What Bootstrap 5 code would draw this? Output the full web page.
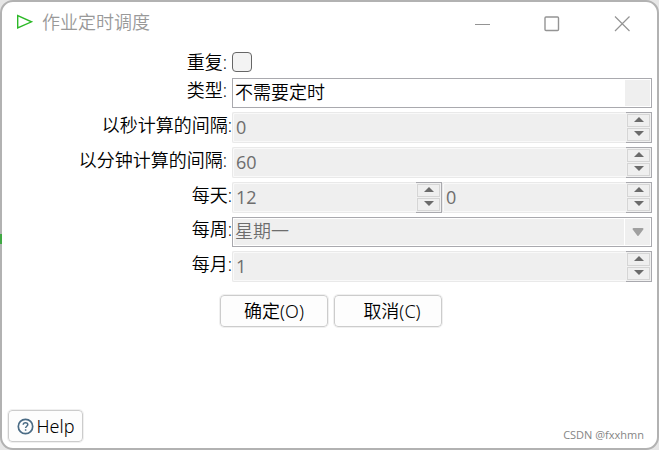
<!DOCTYPE html>
<html lang="zh-CN">
<head>
<meta charset="utf-8">
<meta name="viewport" content="width=device-width, initial-scale=1">
<title>作业定时调度</title>
<link href="https://cdn.jsdelivr.net/npm/bootstrap@5.3.0/dist/css/bootstrap.min.css" rel="stylesheet">
<style>
  body { background: #e6e6e6; color: #000; font: 18px/24px "Open Sans", "Noto Sans CJK SC", sans-serif; font-weight: 350; }
  .dialog { border: 2px solid #b2b2b2; border-radius: 13px; background: #fff; }
  .edge-mark { left: 0; top: 234px; width: 2px; height: 10px; background: #3fa843; }
  .titlebar { height: 42px; padding: 0 0 3px 14px; color: #999; }
  .titlebar h1 { font-size: 18px; line-height: 24px; font-weight: 350; }
  .win-btn { width: 70px; height: 38px; border: 0; background: none; color: #949494; }
  .form-area { padding: 6px 5px 0 0; }
  .line { height: 31px; margin-bottom: 4px; }
  .line-check { height: 24px; margin-bottom: 4px; }
  .line-combo { height: 30px; margin-bottom: 4px; }
  .name { width: 230px; padding-bottom: 6px; text-align: right; white-space: nowrap; flex: none; }
  .name-gap { padding-right: 5px; }
  .tick { appearance: none; width: 20px; height: 20px; border: 1px solid #666; border-radius: 4px; background: #f3f3f3; }
  .combo { border: 1px solid #a9a9ae; padding: 1px; background: #fff; }
  .combo select { appearance: none; border: 0; padding: 0 0 2px 1px; background: #fff; color: #000; opacity: 1; font-weight: 350; }
  .combo-end { width: 25px; margin-left: 1px; background: #efefef; flex: none; }
  .combo select:disabled { background: #efefef; color: #6d6d6d; }
  .field { border: 1px solid #e9e9e9; border-right: 0; border-radius: 2px 0 0 2px; box-shadow: inset 1px 1px #f9f9f9, inset 0 -1px #f9f9f9; background: #efefef; color: #6d6d6d; padding: 0 0 1px 3px; min-width: 0; width: 0; }
  .spin { width: 26px; border: 1px solid #a9a9ae; border-left: 0; background: #f1f1f1; padding: 1px; gap: 1px; flex: none; }
  .spin button { flex: 1; border: 1px solid #d5d5d5; background: #efefef; padding: 0 0 2px; min-height: 0; line-height: 0; color: #6b6b6b; }
  .spin svg { display: block; margin: 0 auto; }
  .first-spin { width: 50%; flex: none; }
  .push { border: 1px solid #ccc; border-radius: 4px; outline: 1px solid #f0f0f0; background: #fdfdfd; color: #000; height: 32px; padding: 0; font-family: "Noto Sans", "Noto Sans CJK SC", sans-serif; font-weight: 350; }
  .push-dialog { width: 108px; }
  .actions { gap: 6px; padding: 9px 0 0 8px; }
  .footer-area { padding: 0 13px 6px 6px; }
  .push-help { width: 75px; gap: 3px; }
  .credit { font: 11px/14px "Open Sans", sans-serif; color: #858585; }
</style>
<script src="https://cdn.jsdelivr.net/npm/bootstrap@5.3.0/dist/js/bootstrap.bundle.min.js"></script>
</head>
<body>
<main class="dialog d-flex flex-column vh-100">
  <header class="titlebar d-flex align-items-center">
    <svg width="18" height="16" viewBox="0 0 18 16" fill="none" stroke="#2db928" stroke-width="1.4" aria-hidden="true"><path d="M1.7 1.6V14L15.5 7.8Z"/></svg>
    <h1 class="mb-0 ms-2 flex-grow-1">作业定时调度</h1>
    <button class="win-btn" type="button" aria-label="最小化"><svg width="16" height="16" stroke="currentColor"><path d="M1 8.5H16"/></svg></button>
    <button class="win-btn" type="button" aria-label="最大化"><svg width="16" height="16" fill="none" stroke="currentColor" stroke-width="1.4"><rect x="1" y="1" width="13.5" height="13.5" rx="1"/></svg></button>
    <button class="win-btn" type="button" aria-label="关闭"><svg width="16" height="16" stroke="currentColor" stroke-width="1.2"><path d="M1 .5l14.5 14.5M15.5.5L1 15"/></svg></button>
  </header>

  <form class="form-area">
    <div class="line-check d-flex align-items-center">
      <label class="name name-gap pb-0" for="repeat">重复:</label>
      <input class="tick" type="checkbox" id="repeat">
    </div>
    <div class="line-combo d-flex align-items-center">
      <label class="name name-gap" for="type">类型:</label>
      <div class="combo d-flex flex-grow-1 h-100">
        <select class="flex-grow-1" id="type"><option>不需要定时</option></select>
        <span class="combo-end"></span>
      </div>
    </div>
    <div class="line d-flex align-items-center">
      <label class="name" for="seconds">以秒计算的间隔:</label>
      <div class="d-flex flex-grow-1 h-100">
        <input class="field flex-grow-1" id="seconds" value="0" disabled>
        <span class="spin d-flex flex-column">
          <button type="button" aria-label="增加" disabled><svg width="10" height="6" fill="currentColor"><path d="M5 0l5 5H0z"/></svg></button>
          <button type="button" aria-label="减少" disabled><svg width="10" height="6" fill="currentColor"><path d="M0 0h10L5 5z"/></svg></button>
        </span>
      </div>
    </div>
    <div class="line d-flex align-items-center">
      <label class="name name-gap" for="minutes">以分钟计算的间隔:</label>
      <div class="d-flex flex-grow-1 h-100">
        <input class="field flex-grow-1" id="minutes" value="60" disabled>
        <span class="spin d-flex flex-column">
          <button type="button" aria-label="增加" disabled><svg width="10" height="6" fill="currentColor"><path d="M5 0l5 5H0z"/></svg></button>
          <button type="button" aria-label="减少" disabled><svg width="10" height="6" fill="currentColor"><path d="M0 0h10L5 5z"/></svg></button>
        </span>
      </div>
    </div>
    <div class="line d-flex align-items-center">
      <label class="name" for="hour">每天:</label>
      <div class="d-flex flex-grow-1 h-100">
        <div class="first-spin d-flex">
          <input class="field flex-grow-1" id="hour" value="12" disabled>
          <span class="spin d-flex flex-column">
            <button type="button" aria-label="增加" disabled><svg width="10" height="6" fill="currentColor"><path d="M5 0l5 5H0z"/></svg></button>
            <button type="button" aria-label="减少" disabled><svg width="10" height="6" fill="currentColor"><path d="M0 0h10L5 5z"/></svg></button>
          </span>
        </div>
        <input class="field flex-grow-1" id="minute" value="0" aria-label="分钟" disabled>
        <span class="spin d-flex flex-column">
          <button type="button" aria-label="增加" disabled><svg width="10" height="6" fill="currentColor"><path d="M5 0l5 5H0z"/></svg></button>
          <button type="button" aria-label="减少" disabled><svg width="10" height="6" fill="currentColor"><path d="M0 0h10L5 5z"/></svg></button>
        </span>
      </div>
    </div>
    <div class="line-combo d-flex align-items-center">
      <label class="name" for="weekday">每周:</label>
      <div class="combo d-flex flex-grow-1 h-100">
        <select class="flex-grow-1" id="weekday" disabled><option>星期一</option></select>
        <span class="combo-end d-flex align-items-center justify-content-center"><svg width="12" height="10" viewBox="0 0 12 10" fill="#a0a0a0" stroke="#a0a0a0" stroke-linejoin="round" stroke-width="2" aria-hidden="true"><path d="M1.5 2h9L6 8z"/></svg></span>
      </div>
    </div>
    <div class="line d-flex align-items-center">
      <label class="name" for="monthday">每月:</label>
      <div class="d-flex flex-grow-1 h-100">
        <input class="field flex-grow-1" id="monthday" value="1" disabled>
        <span class="spin d-flex flex-column">
          <button type="button" aria-label="增加" disabled><svg width="10" height="6" fill="currentColor"><path d="M5 0l5 5H0z"/></svg></button>
          <button type="button" aria-label="减少" disabled><svg width="10" height="6" fill="currentColor"><path d="M0 0h10L5 5z"/></svg></button>
        </span>
      </div>
    </div>
    <div class="actions d-flex justify-content-center">
      <button class="push push-dialog" type="button">确定(O)</button>
      <button class="push push-dialog ps-2" type="button">取消(C)</button>
    </div>
  </form>

  <footer class="footer-area d-flex justify-content-between align-items-end mt-auto">
    <button class="push push-help d-flex align-items-center justify-content-center" type="button">
      <svg width="17" height="17" viewBox="0 0 17 17" fill="none" stroke="#4a6b85" stroke-width="1.7" aria-hidden="true"><circle cx="8.5" cy="8.5" r="7.2"/><path d="M6.2 6.8C6.2 3.9 10.8 4 10.8 6.6 10.8 8.3 8.6 8.2 8.6 10.1M8.6 11.2v1.6" stroke-width="1.5"/></svg>
      <span>Help</span>
    </button>
    <span class="credit">CSDN @fxxhmn</span>
  </footer>
</main>
<span class="edge-mark position-absolute" aria-hidden="true"></span>
</body>
</html>
